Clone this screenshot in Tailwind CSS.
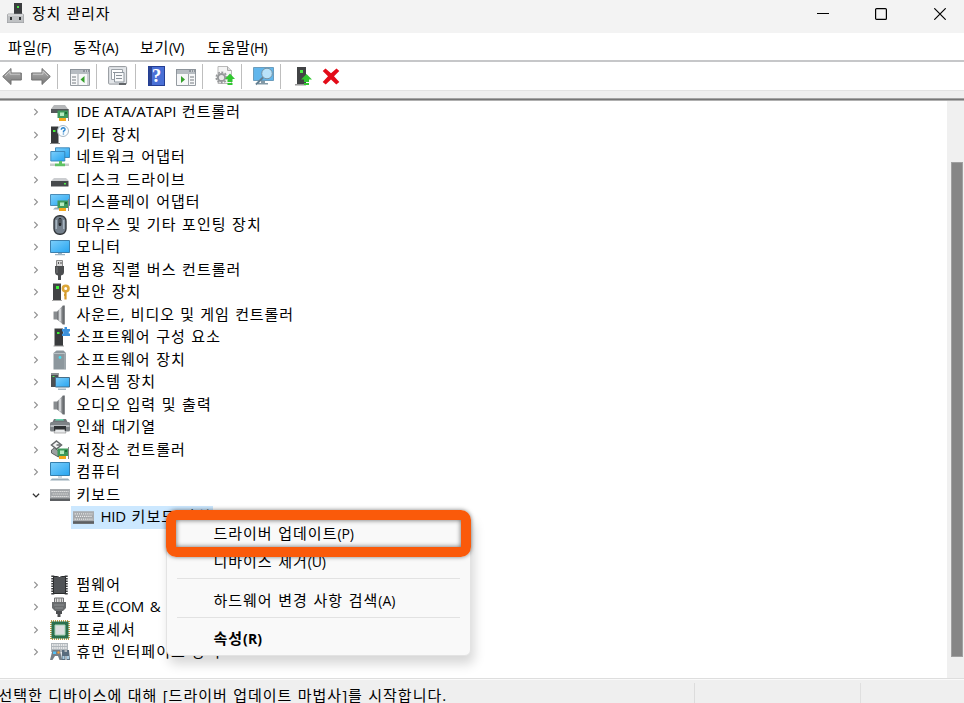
<!DOCTYPE html>
<html lang="ko">

<head>
    <meta charset="UTF-8">
    <meta name="viewport" content="width=device-width, initial-scale=1.0">
    <title>장치 관리자</title>
    <script src="https://cdn.jsdelivr.net/npm/@tailwindcss/browser@4"></script>
</head>

<body class="w-[964px] h-[703px] overflow-hidden bg-white text-black text-[15px] font-['Open_Sans','Noto_Sans_CJK_KR',sans-serif]">
    <!-- 아이콘 정의 -->
    <svg width="0" height="0" class="absolute">
        <defs>
            <linearGradient id="screen" x1="0" y1="0" x2="1" y2="1">
                <stop offset="0" stop-color="#7dcffb" />
                <stop offset="1" stop-color="#27a5f1" />
            </linearGradient>
            <linearGradient id="metal" x1="0" y1="0" x2="1" y2="0">
                <stop offset="0" stop-color="#676a6d" />
                <stop offset=".5" stop-color="#c4c7ca" />
                <stop offset="1" stop-color="#707376" />
            </linearGradient>
            <linearGradient id="arrow" x1="0" y1="0" x2="0" y2="1">
                <stop offset="0" stop-color="#b3b3b3" />
                <stop offset="1" stop-color="#777" />
            </linearGradient>
            <g id="card">
                <path d="M7.500 8.500h10.500v7.500H7.500z" fill="#3f9a5b" />
                <path d="M10 10.500h4v3.500h-4z" fill="#b5ecc0" />
                <path d="M15 10h2v2h-2z" fill="#1d6d38" />
                <path d="M9 16h7v3H9z" fill="#f4a91c" />
                <path d="M18.500 7v12" stroke="#888" />
            </g>
            <symbol id="i-ide" viewBox="0 0 20 20">
                <path d="M4 3h11l3 4H1z" fill="#b5b7b9" />
                <path d="M1 7h17v4H1z" fill="#55585b" />
                <use href="#card" />
            </symbol>
            <symbol id="i-unknown" viewBox="0 0 20 20">
                <path d="M1 1.500h7.500V18H1z" fill="#37393b" />
                <path d="M0 18h10v1H0z" fill="#888" />
                <path d="M3 5h2.500v2H3z" fill="#43ef36" />
                <circle cx="13" cy="6" r="5.500" fill="#fafdff" stroke="#a9b8c4" />
                <path d="M11.300 4.800q.1-2 1.900-2 2 .1 1.800 1.800-.1 1-1.500 1.600v1.300M13.400 8.400v1.200" fill="none" stroke="#2e86ce" stroke-width="1.400" />
            </symbol>
            <symbol id="i-network" viewBox="0 0 20 20">
                <path d="M5.500 .8h14v9.700h-14z" fill="url(#screen)" stroke="#3681b4" stroke-width=".9" />
                <path d="M.8 4.500h14v9.500H.8z" fill="url(#screen)" stroke="#3681b4" stroke-width=".9" />
                <path d="M9 14h3v2.500h3v2.700H5v-2.700h4z" fill="#5fc264" />
                <path d="M0 16.500h5v2.500H0zM15 16.500h4v2.500h-4z" fill="#c7cccb" />
            </symbol>
            <symbol id="i-disk" viewBox="0 0 20 20">
                <path d="M4 8h12l3 3H1z" fill="#cbcdd0" />
                <path d="M1 11h17.500v5.500H1z" fill="#46494c" />
                <path d="M14 13h2v1.500h-2z" fill="#4ff04a" />
            </symbol>
            <symbol id="i-display" viewBox="0 0 20 20">
                <path d="M.5 2.500h19v11H.5z" fill="url(#screen)" stroke="#4c8cb7" />
                <path d="M5 15.500h4v2H3z" fill="#9aabb6" />
                <use href="#card" />
            </symbol>
            <symbol id="i-mouse" viewBox="0 0 20 20">
                <rect x="4" y=".7" width="12" height="18.600" rx="5.500" fill="#74808c" stroke="#34383c" stroke-width="1.400" />
                <path d="M6.300 5v9M13.700 5v9" stroke="#a9b6c1" stroke-width="1.500" />
                <rect x="8.600" y="3" width="2.800" height="8" rx="1.200" fill="#25282b" />
                <path d="M10 4v4" stroke="#8f9aa4" stroke-width=".8" />
            </symbol>
            <symbol id="i-monitor" viewBox="0 0 20 20">
                <path d="M.5 3.500h19v12H.5z" fill="url(#screen)" stroke="#3d80ad" />
                <path d="M8 16h4v1h3v1.200H5V17h3z" fill="#9db3c2" />
            </symbol>
            <symbol id="i-usb" viewBox="0 0 20 20">
                <path d="M6.500.5h6v6h-6z" fill="#d7d7d7" stroke="#888" />
                <path d="M8 2h1v2H8zM10.500 2h1v2h-1z" fill="#555" />
                <path d="M5 6h9v6q0 3-3 3.500V20H8v-4.500Q5 15 5 12z" fill="#4b4d4f" />
                <path d="M7 7v6" stroke="#787b7d" />
            </symbol>
            <symbol id="i-security" viewBox="0 0 20 20">
                <path d="M3 1.500h8V18H3z" fill="#414345" />
                <path d="M2 18h10v1H2z" fill="#aaa" />
                <path d="M6 4h3v3H6z" fill="#3cf239" />
                <circle cx="15.700" cy="6.500" r="2.800" fill="none" stroke="#dca638" stroke-width="2.600" />
                <path d="M15.500 9.500v8M14 13h2" stroke="#d49a2d" stroke-width="2.200" />
            </symbol>
            <symbol id="i-sound" viewBox="0 0 20 20">
                <path d="M3.500 6.500h4v8h-4z" fill="#888c8f" />
                <path d="M7 6.500L13 .5v19l-6-5z" fill="url(#metal)" />
                <path d="M12.800.5h2v19h-2z" fill="#686c70" />
                <path d="M10 4v12" stroke="#eef0f1" />
            </symbol>
            <symbol id="i-component" viewBox="0 0 20 20">
                <path d="M4.500 1.500h8.500V19H4.500z" fill="#393b3d" />
                <path d="M3.500 18.500H14v1H3.500z" fill="#999" />
                <path d="M7 5h2.500v2H7z" fill="#3cee35" />
                <path d="M12 2h2.500V0H17v2h3v2.500h-1.200v2H20V9h-8V6.800h1.300V4.500H12z" fill="#3b91dc" />
            </symbol>
            <symbol id="i-device" viewBox="0 0 20 20">
                <path d="M3.500 3l3-2.500h7L16 3v16.500H3.500z" fill="#8d979d" />
                <path d="M4 3.500h11.500" fill="none" stroke="#b8c0c4" />
                <path d="M15 4v15" stroke="#aeb6ba" />
                <circle cx="10" cy="7.500" r="1.400" fill="#44dff3" />
            </symbol>
            <symbol id="i-system" viewBox="0 0 20 20">
                <path d="M1 1h7.500v14H1z" fill="#4b5054" />
                <path d="M1 1h7.500v2H1z" fill="#8c9194" />
                <path d="M2.500 4h2v1h-2z" fill="#51ef50" />
                <path d="M5.500 5.500h14v9.500h-14z" fill="url(#screen)" stroke="#476e88" />
                <path d="M8 16.500h8v1.500H8z" fill="#a5b8c3" />
            </symbol>
            <symbol id="i-printer" viewBox="0 0 20 20">
                <path d="M4 2h12l2 4H2z" fill="#717579" />
                <path d="M6 2h7l1 1.500H5z" fill="#67d4ae" />
                <rect x="0" y="5" width="20" height="9.500" rx="1.500" fill="#7e8387" />
                <path d="M.5 8h19v2H.5z" fill="#b9bdc0" />
                <path d="M4 9h12v5H4z" fill="#2d3033" />
                <path d="M5.500 12.500h9l1.500 3.500H4z" fill="#e8eaeb" stroke="#888" stroke-width=".6" />
            </symbol>
            <symbol id="i-storage" viewBox="0 0 20 20">
                <path d="M6.500 1L11.500 5 6.500 9 1.500 5z" fill="#f4f4f4" stroke="#66696b" stroke-width="1.500" />
                <path d="M6.500 5h4" stroke="#66696b" stroke-width="1.500" />
                <path d="M1.500 10l3-2 4 3v6L1.500 13z" fill="#9da0a2" stroke="#5f6264" />
                <use href="#card" />
            </symbol>
            <symbol id="i-computer" viewBox="0 0 20 20">
                <path d="M.5.5h19v13H.5z" fill="url(#screen)" stroke="#347fae" />
                <path d="M8 14h4v2H8z" fill="#d1dae0" />
                <path d="M2 16.500h16l2 2H0z" fill="#9aadb9" />
            </symbol>
            <symbol id="i-keyboard" viewBox="0 0 20 20">
                <path d="M0 4h20v12H0z" fill="#a9acaf" />
                <path d="M0 13.500h20V16H0z" fill="#5d6063" />
                <path d="M1.500 6.500h17M1.500 9h17M1.500 11.500h17" stroke="#96999c" stroke-width="1.400" />
                <path d="M1.500 6.500h17M2.500 9h16M1.500 11.500h17" stroke="#ececec" stroke-width="1.200" stroke-dasharray="1.300 .7" />
            </symbol>
            <symbol id="i-firmware" viewBox="0 0 20 20">
                <path d="M2.800 .5v19M16.200 .5v19" stroke="#3a3c3e" stroke-width="3" stroke-dasharray="1.500 1" />
                <path d="M3.500 1.500h4q2 2 4 0h4v17h-12z" fill="#505356" stroke="#2b2d2e" />
            </symbol>
            <symbol id="i-port" viewBox="0 0 20 20">
                <path d="M4.500 1h9v6h-9z" fill="#ddd" stroke="#707274" />
                <path d="M6.500 1v5M9 1v5M11.500 1v5" stroke="#888" />
                <path d="M2 5h14v6l-3 3H5l-3-3z" fill="#696c6e" />
                <path d="M6 14h6v3h-1.500v3h-3v-3H6z" fill="#4b4d4f" />
                <path d="M4 8h10M5 11h8" stroke="#8d8f91" />
            </symbol>
            <symbol id="i-cpu" viewBox="0 0 20 20">
                <path d="M1 1h18v18H1z" fill="none" stroke="#bd9d49" stroke-width="2" stroke-dasharray="1 1" />
                <path d="M1.500 1.500h17v17h-17z" fill="#2c704e" />
                <path d="M5 5h10v10H5z" fill="#dcdfe0" stroke="#a9d3b6" />
            </symbol>
            <symbol id="i-hid" viewBox="0 0 20 20">
                <path d="M1 1h17v9H1z" fill="#b0b6bb" />
                <path d="M2 3h15M2 6h15" stroke="#f7f7f7" stroke-width="1.500" stroke-dasharray="1.500 .7" />
                <path d="M2.500 8h7.500l2 10H9.500L8 14H5l-2.500 4H0z" fill="#777f86" />
                <path d="M3 9.500h3V12H3z" fill="#53bff4" />
                <circle cx="8.500" cy="10.500" r="1.200" fill="#f09c3d" />
                <path d="M12 8h2.500v2H17V8h2l1 10h-3.500v-4h-1v4h-4z" fill="#596c7d" />
                <path d="M12.500 14h2v3h-2zM17 14h2v3h-2z" fill="#a9cce2" />
            </symbol>
            <symbol id="chev" viewBox="0 0 8 8">
                <path d="M2.300 .9L5.400 4 2.300 7.100" fill="none" stroke="#929292" stroke-width="1.200" />
            </symbol>
            <symbol id="tool-back" viewBox="0 0 20 20">
                <path d="M.7 10.500L9 2.500V7h10.300v7H9v4.500z" fill="url(#arrow)" stroke="#707070" stroke-linejoin="round" />
                <path d="M3 10l5-5v3.200h10" fill="none" stroke="#c9c9c9" />
            </symbol>
            <symbol id="tool-pane" viewBox="0 0 20 17">
                <path d="M.5.5h19v16H.5z" fill="#f7f8f9" stroke="#959ba1" />
                <path d="M0 0h20v5H0z" fill="#8d949b" />
                <path d="M1 2h12M1 4h18" stroke="#e0e4e8" />
                <path d="M15 2h4" stroke="#fff" stroke-dasharray="1 1" />
            </symbol>
        </defs>
    </svg>

    <div class="relative flex h-[703px] flex-col">
        <!-- 제목 표시줄 -->
        <header class="flex h-[33px] shrink-0 items-start bg-[#f3f3f3]">
            <svg class="mt-[3px] ml-[7px] h-5 w-[17px]" viewBox="0 0 17 20">
                <path d="M7 0h8v12H7z" fill="#3b3d3f" />
                <path d="M10 3h2v2h-2z" fill="#4be84a" />
                <path d="M1 11h15l1 2v7H0v-7z" fill="#bfc1c3" stroke="#8b8d8f" stroke-width=".7" />
                <path d="M3 14h2v3H3zM12 14h2v3h-2z" fill="#303234" />
                <path d="M1 12h15" stroke="#eee" />
            </svg>
            <h1 class="ml-2 h-[26px] w-60 text-[15px] leading-[26px] tracking-[0.8px] whitespace-nowrap [word-spacing:0.6px]">장치 관리자</h1>
            <div class="ml-auto flex h-[28px] items-center">
                <svg class="mr-[46px] h-3 w-3" viewBox="0 0 12 12"><path d="M0 5.500h12" stroke="#000" /></svg>
                <svg class="mr-[47px] h-3 w-3" viewBox="0 0 12 12"><rect x=".6" y=".6" width="10.800" height="10.800" rx="1" fill="none" stroke="#000" stroke-width="1.200" /></svg>
                <svg class="mr-[18px] h-3 w-3" viewBox="0 0 12 12"><path d="M.3.3l11.400 11.400M11.700.3L.3 11.700" stroke="#000" stroke-width="1.200" /></svg>
            </div>
        </header>

        <!-- 메뉴 -->
        <nav class="flex h-[29px] shrink-0 border-b-2 border-[#c6c7c9] pl-[8px] text-[15px] leading-[28px] tracking-[0.7px] whitespace-nowrap">
            <span class="w-[65px]">파일<span class="text-[14px] tracking-[-0.5px]">(F)</span></span>
            <span class="w-[67px]">동작<span class="text-[14px] tracking-[-0.3px]">(A)</span></span>
            <span class="w-[67px]">보기<span class="text-[14px] tracking-[-0.6px]">(V)</span></span>
            <span>도움말<span class="text-[14px] tracking-[-0.7px]">(H)</span></span>
        </nav>

        <!-- 도구 모음 -->
        <div class="flex h-[29px] shrink-0 items-center border-b border-[#e3e3e3] pl-[2px]">
            <svg class="h-5 w-5"><use href="#tool-back" /></svg>
            <svg class="ml-[9px] h-5 w-5 -scale-x-100"><use href="#tool-back" /></svg>
            <div class="ml-[6px] h-[25px] w-px bg-[#bebebe]"></div>
            <svg class="mt-[3px] ml-3 h-[17px] w-5" viewBox="0 0 20 17">
                <use href="#tool-pane" />
                <path d="M8 5v12M18 5v12" stroke="#9ea4aa" />
                <path d="M2 8h4M2 11h4M2 14h4" stroke="#757b80" />
                <path d="M14.500 7v7l-4-3.500z" fill="#35a02b" />
            </svg>
            <div class="ml-[6px] h-[25px] w-px bg-[#bebebe]"></div>
            <svg class="ml-[11px] h-5 w-5" viewBox="0 0 20 20">
                <rect x=".6" y=".6" width="18" height="17.500" rx="1" fill="#e2e5e8" stroke="#93989c" />
                <path d="M3.500 3.500h11v10h-11z" fill="#fff" stroke="#9ca2a8" />
                <path d="M6.500 6.500h9.500v9.500H6.500z" fill="#f8f9fa" stroke="#9098a0" />
                <path d="M5 6.500h5M8 9.500h6M8 12.500h6" stroke="#8b9299" />
                <path d="M11 18h7" stroke="#62666a" stroke-width="2" />
            </svg>
            <div class="ml-[7px] h-[25px] w-px bg-[#bebebe]"></div>
            <div class="ml-3 flex h-5 w-[17px] items-center justify-center border border-[#243e93] bg-linear-to-r from-[#2b4494] from-20% to-[#4a70d6] to-20% font-['Liberation_Serif',serif] text-[19px] leading-5 font-bold text-white">?</div>
            <svg class="mt-[3px] ml-[11px] h-[17px] w-5" viewBox="0 0 20 17">
                <use href="#tool-pane" />
                <path d="M12.500 5v12" stroke="#9ea4aa" />
                <path d="M14 8h4M14 11h4M14 14h4" stroke="#757b80" />
                <path d="M5 7v7l4-3.500z" fill="#35a02b" />
            </svg>
            <div class="ml-[6px] h-[25px] w-px bg-[#bebebe]"></div>
            <svg class="ml-3 h-5 w-5" viewBox="0 0 20 20">
                <path d="M3 .5h9.500l4 4v13H3z" fill="#f4f4f4" stroke="#b9b9b9" />
                <path d="M12.500 .5v4h4" fill="#ddd" stroke="#aaa" />
                <circle cx="6.500" cy="11.500" r="3.600" fill="#e8e8e8" stroke="#96989a" stroke-width="2" />
                <circle cx="6.500" cy="11.500" r="5.300" fill="none" stroke="#96989a" stroke-width="1.500" stroke-dasharray="2 1.450" />
                <path d="M15 7.500l5 5.500h-2.500v3h-5v-3H10zM12.500 17h5v2h-5z" fill="#31c730" />
            </svg>
            <div class="ml-[6px] h-[25px] w-px bg-[#bebebe]"></div>
            <svg class="ml-[11px] h-5 w-[21px]" viewBox="0 0 21 20">
                <path d="M.5 1.500h20v13H.5z" fill="#61b6ec" stroke="#6b9dbd" />
                <path d="M8 15h4v2h3v1.500H5V17h3z" fill="#8399a6" />
                <circle cx="14" cy="7.500" r="5.300" fill="#b9e3fa" stroke="#7893a4" />
                <path d="M10 11.500l-7 7" stroke="#637f91" stroke-width="2" />
            </svg>
            <div class="ml-[6px] h-[25px] w-px bg-[#bebebe]"></div>
            <svg class="ml-[14px] h-5 w-[18px]" viewBox="0 0 18 20">
                <path d="M2 1h9v17H2z" fill="#414345" />
                <path d="M0 18h11v1.500H0z" fill="#999" />
                <path d="M5 4h3v3H5z" fill="#47ec41" />
                <path d="M11.500 8l5.500 5.500h-3v2.500H9v-2.500H6zM9 17h5v2H9z" fill="#31c730" />
            </svg>
            <svg class="ml-[9px] h-[17px] w-[18px]" viewBox="0 0 18 17"><path d="M3.500.5L9 5.300 14.500.5 17.300 3 12 8.300 17.300 14l-3 2.500L9 11.500l-5.300 5L.7 14 6 8.300.7 3z" fill="#e30b18" /></svg>
        </div>
        <div class="h-[7px] shrink-0 bg-[#efefef]"></div>
        <div class="h-[3px] shrink-0 border-y border-t-[#a3a3a3] border-b-[#b0b0b0] bg-[#777]"></div>

        <!-- 장치 트리 -->
        <main class="flex h-[577px] shrink-0">
            <ul class="flex-1 pl-8 leading-[20px] tracking-[1.03px] whitespace-nowrap [word-spacing:0.6px] [&>li]:flex [&>li]:h-[22.5px] [&>li]:items-center [&_span]:ml-[6.5px] [&_span]:pb-[2px]">
                <li><svg class="mr-[10px] size-2"><use href="#chev" /></svg><svg class="size-5"><use href="#i-ide" /></svg><span><b class="font-normal tracking-[-0.1px]">IDE ATA/ATAPI</b> 컨트롤러</span></li>
                <li><svg class="mr-[10px] size-2"><use href="#chev" /></svg><svg class="size-5"><use href="#i-unknown" /></svg><span>기타 장치</span></li>
                <li><svg class="mr-[10px] size-2"><use href="#chev" /></svg><svg class="size-5"><use href="#i-network" /></svg><span>네트워크 어댑터</span></li>
                <li><svg class="mr-[10px] size-2"><use href="#chev" /></svg><svg class="size-5"><use href="#i-disk" /></svg><span>디스크 드라이브</span></li>
                <li><svg class="mr-[10px] size-2"><use href="#chev" /></svg><svg class="size-5"><use href="#i-display" /></svg><span>디스플레이 어댑터</span></li>
                <li><svg class="mr-[10px] size-2"><use href="#chev" /></svg><svg class="size-5"><use href="#i-mouse" /></svg><span>마우스 및 기타 포인팅 장치</span></li>
                <li><svg class="mr-[10px] size-2"><use href="#chev" /></svg><svg class="size-5"><use href="#i-monitor" /></svg><span>모니터</span></li>
                <li><svg class="mr-[10px] size-2"><use href="#chev" /></svg><svg class="size-5"><use href="#i-usb" /></svg><span>범용 직렬 버스 컨트롤러</span></li>
                <li><svg class="mr-[10px] size-2"><use href="#chev" /></svg><svg class="size-5"><use href="#i-security" /></svg><span>보안 장치</span></li>
                <li><svg class="mr-[10px] size-2"><use href="#chev" /></svg><svg class="size-5"><use href="#i-sound" /></svg><span class="tracking-[0.9px]">사운드, 비디오 및 게임 컨트롤러</span></li>
                <li><svg class="mr-[10px] size-2"><use href="#chev" /></svg><svg class="size-5"><use href="#i-component" /></svg><span>소프트웨어 구성 요소</span></li>
                <li><svg class="mr-[10px] size-2"><use href="#chev" /></svg><svg class="size-5"><use href="#i-device" /></svg><span>소프트웨어 장치</span></li>
                <li><svg class="mr-[10px] size-2"><use href="#chev" /></svg><svg class="size-5"><use href="#i-system" /></svg><span>시스템 장치</span></li>
                <li><svg class="mr-[10px] size-2"><use href="#chev" /></svg><svg class="size-5"><use href="#i-sound" /></svg><span>오디오 입력 및 출력</span></li>
                <li><svg class="mr-[10px] size-2"><use href="#chev" /></svg><svg class="size-5"><use href="#i-printer" /></svg><span>인쇄 대기열</span></li>
                <li><svg class="mr-[10px] size-2"><use href="#chev" /></svg><svg class="size-5"><use href="#i-storage" /></svg><span>저장소 컨트롤러</span></li>
                <li><svg class="mr-[10px] size-2"><use href="#chev" /></svg><svg class="size-5"><use href="#i-computer" /></svg><span>컴퓨터</span></li>
                <li><svg class="mr-[10px] size-2" viewBox="0 0 8 8"><path d="M.9 2.800L4 5.900 7.100 2.800" fill="none" stroke="#333" stroke-width="1.300" /></svg><svg class="size-5"><use href="#i-keyboard" /></svg><span>키보드</span></li>
                <li>
                    <div class="ml-[39px] flex h-[22.5px] w-[142px] items-center bg-[#cce8ff] pl-[2px]"><svg class="size-[21px]"><use href="#i-keyboard" /></svg><span><b class="font-normal tracking-[-0.2px]">HID</b> 키보드 장치</span></div>
                </li>
                <li class="mt-[45px]"><svg class="mr-[10px] size-2"><use href="#chev" /></svg><svg class="size-5"><use href="#i-firmware" /></svg><span>펌웨어</span></li>
                <li><svg class="mr-[10px] size-2"><use href="#chev" /></svg><svg class="size-5"><use href="#i-port" /></svg><span>포트<b class="font-normal tracking-[-0.3px] [word-spacing:2.2px]">(COM &amp; LPT)</b></span></li>
                <li><svg class="mr-[10px] size-2"><use href="#chev" /></svg><svg class="size-5"><use href="#i-cpu" /></svg><span>프로세서</span></li>
                <li><svg class="mr-[10px] size-2"><use href="#chev" /></svg><svg class="size-5"><use href="#i-hid" /></svg><span>휴먼 인터페이스 장치</span></li>
            </ul>
            <!-- 스크롤바 -->
            <div class="w-[17px] bg-[#f0f0f0] pt-[61px] pl-1">
                <div class="h-[495px] w-3 border border-[#a0a0a0] bg-[#868686]"></div>
            </div>
        </main>

        <!-- 상태 표시줄 -->
        <footer class="flex h-[25px] shrink-0 border-t border-[#dedede] bg-[#efefef] shadow-[inset_0_1px_0_#fafafa]">
            <div class="mt-1 h-[20px] w-[695px] border-r border-[#dcdcdc] leading-[24px] tracking-[0.98px] whitespace-nowrap [word-spacing:0.6px]"><span class="-ml-[1.500px]">선택한 디바이스에 대해 [드라이버 업데이트 마법사]를 시작합니다.</span></div>
            <div class="mt-1 w-[166px] border-r border-[#dfdfdf]"></div>
        </footer>

        <!-- 상황에 맞는 메뉴 -->
        <div class="absolute top-[514px] left-[166px] h-[142px] w-[305px] rounded-[6px] border border-[#e3e3e3] bg-[#f9f9f9] px-[10px] leading-[26px] tracking-[0.98px] whitespace-nowrap shadow-[3px_8px_12px_rgba(0,0,0,0.16)] [word-spacing:0.8px]">
            <div class="mt-[5px] h-[28px] pl-[36.500px]">드라이버 업데이트<span class="text-[14px] tracking-[-0.1px]">(P)</span></div>
            <div class="h-[30px] pl-[36.500px]">디바이스 제거<span class="text-[14px] tracking-[-0.2px]">(U)</span></div>
            <div class="h-[39px] border-t border-[#e2e2e2] pt-[8px] pl-[36.500px]">하드웨어 변경 사항 검색<span class="text-[14px] tracking-[0px]">(A)</span></div>
            <div class="h-[38px] border-t border-[#e2e2e2] pt-[7px] pl-[36.500px] font-bold">속성<span class="text-[14px] tracking-[0.1px]">(R)</span></div>
        </div>
        <!-- 강조 테두리 -->
        <div class="absolute top-[510px] left-[166px] h-[47px] w-[305px] rounded-[10px] border-10 border-[#fa5a0a] shadow-[0_0_4px_rgba(0,0,0,0.5),inset_0_0_5px_rgba(0,0,0,0.6)]"></div>
    </div>
</body>

</html>
